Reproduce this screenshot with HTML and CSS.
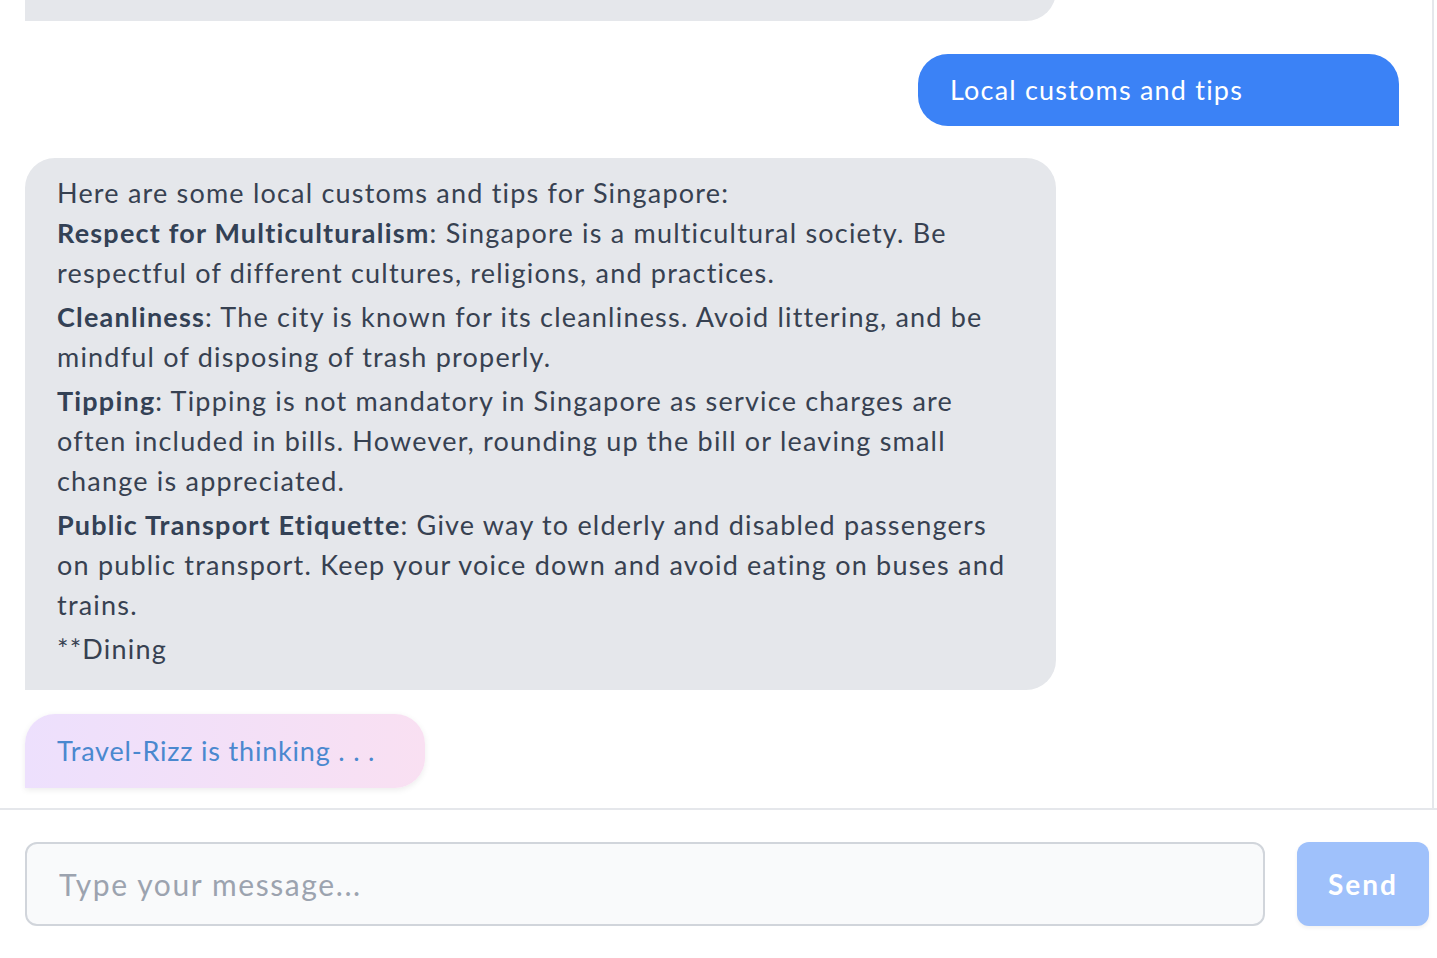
FILE: index.html
```html
<!DOCTYPE html>
<html lang="en">
<head>
<meta charset="utf-8">
<title>Travel-Rizz</title>
<link rel="stylesheet" href="styles.css">
</head>
<body>
<div class="app">
  <section class="chat">
    <div class="messages">
      <div class="bubble bot prev">
        <p>Singapore has plenty to offer, from hawker centres to gardens and museums. Let me know if there is anything else I can help with for</p>
        <p>your trip to Singapore.</p>
      </div>
      <div class="bubble user">Local customs and tips</div>
      <div class="bubble bot answer">
        <p class="intro">Here are some local customs and tips for Singapore:</p>
        <p class="item"><strong>Respect for Multiculturalism</strong>: Singapore is a multicultural society. Be respectful of different cultures, religions, and practices.</p>
        <p class="item"><strong>Cleanliness</strong>: The city is known for its cleanliness. Avoid littering, and be mindful of disposing of trash properly.</p>
        <p class="item"><strong>Tipping</strong>: Tipping is not mandatory in Singapore as service charges are often included in bills. However, rounding up the bill or leaving small change is appreciated.</p>
        <p class="item"><strong>Public Transport Etiquette</strong>: Give way to elderly and disabled passengers on public transport. Keep your voice down and avoid eating on buses and trains.</p>
        <p class="item">**Dining</p>
      </div>
      <div class="bubble thinking">Travel-Rizz is thinking . . .</div>
    </div>
  </section>
  <form class="composer">
    <input class="field" type="text" placeholder="Type your message...">
    <button class="send" type="button">Send</button>
  </form>
</div>
</body>
</html>
```
FILE: styles.css
```css
* { box-sizing: border-box; }
html, body { margin: 0; padding: 0; background: #ffffff; }
body {
  font-family: "Lato", "Noto Sans", sans-serif;
  color: #374151;
  letter-spacing: 1.2px;
  width: 1437px;
  height: 958px;
  overflow: hidden;
}
.app { display: flex; flex-direction: column; height: 958px; }
.chat {
  height: 810px;
  flex-shrink: 0;
  border-bottom: 2px solid #e5e7eb;
  display: flex;
  padding-right: 3px;
}
.messages {
  flex: 1;
  border-right: 2px solid #e5e7eb;
  overflow: hidden;
  display: flex;
  flex-direction: column;
  justify-content: flex-end;
  padding: 0 33px 20px 25px;
}
.bubble {
  font-size: 27px;
  line-height: 40px;
  flex-shrink: 0;
}
.bubble p { margin: 0; }
.bot {
  width: 1031px;
  background: #e5e7eb;
  color: #374151;
  border-radius: 30px 30px 30px 0;
  padding: 15px 32px 21px;
}
.bot .item { margin-top: 4px; }
.bot .intro + .item { margin-top: 0; }
.bot strong { font-weight: 700; color: #334155; }
.prev { margin-bottom: 33px; }
.user {
  width: 481px;
  align-self: flex-end;
  background: #3b82f6;
  color: #ffffff;
  border-radius: 30px 30px 0 30px;
  padding: 16px 32px;
  margin-bottom: 32px;
}
.answer { margin-bottom: 24px; }
.thinking {
  width: 400px;
  padding: 17px 32px;
  border-radius: 30px 30px 30px 0;
  background: linear-gradient(90deg, #ede0fd 0%, #f9e0f2 100%);
  color: #4a88cf;
  letter-spacing: 0.8px;
  box-shadow: 0 2px 6px rgba(0, 0, 0, 0.08);
}
.composer {
  margin: 0;
  display: flex;
  gap: 32px;
  padding: 32px 8px 32px 25px;
}
.field {
  flex: 1;
  height: 84px;
  border: 2px solid #d1d5db;
  border-radius: 12px;
  background: #f9fafb;
  padding: 0 32px;
  font-family: inherit;
  font-size: 30px;
  letter-spacing: 1.6px;
  color: #374151;
  outline: none;
}
.field::placeholder { color: #9ca3af; }
.send {
  width: 132px;
  height: 84px;
  border: none;
  border-radius: 12px;
  background: #9fc1fb;
  color: #ffffff;
  font-family: inherit;
  font-weight: 700;
  font-size: 28px;
  letter-spacing: 2px;
  box-shadow: 0 2px 4px rgba(0, 0, 0, 0.06);
}
```
